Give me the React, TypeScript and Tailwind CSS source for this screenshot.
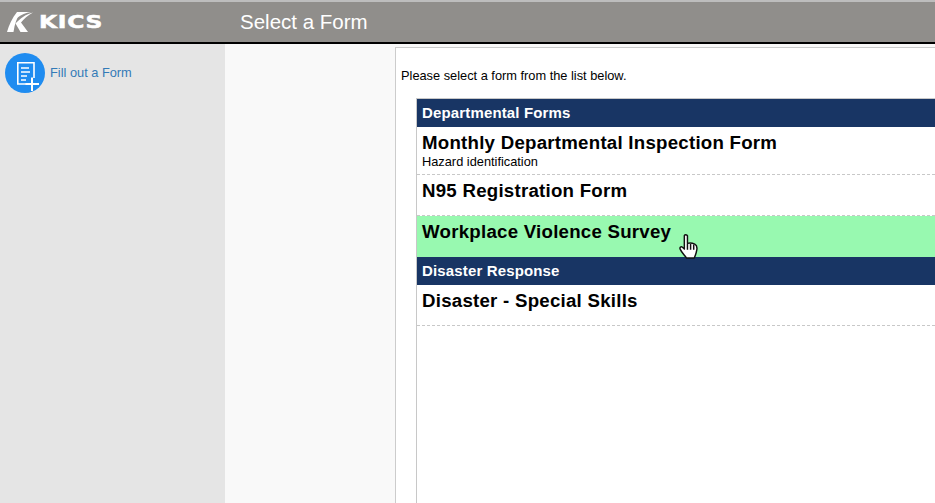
import React from "react";

function Row({ title, green }: { title: string; green?: boolean }) {
  return (
    <div className={`h-[41px] px-[5px] pt-[5px] border-b border-dashed ${green ? "bg-[#98f9b0] border-transparent" : "border-[#c8c8c8]"}`}>
      <div className="text-[18.67px] leading-[22px] font-bold tracking-[0.25px] text-black">{title}</div>
    </div>
  );
}

function Section({ title }: { title: string }) {
  return (
    <div className="h-[28px] bg-[#183564] px-[5px] text-white text-[15px] font-bold leading-[28px] tracking-[0.15px]">{title}</div>
  );
}

export default function App() {
  return (
    <div className="h-[503px] w-[935px] overflow-hidden flex flex-col bg-white font-['Liberation_Sans',Arial,sans-serif]">
      <header className="h-[44px] shrink-0 flex items-center bg-[#908e8b] border-t-2 border-t-[#bdbdbd] border-b-2 border-b-black">
        <div className="w-[240px] pl-[7px] flex items-center gap-[6px]">
          <svg width="26" height="20" viewBox="0 0 26 20" fill="#fff">
            <path d="M0 20 C2 13 5 6 10 0 L14 0 C10 5 7.5 12 6.5 20 Z" />
            <path d="M8.5 11.5 C13 6.5 19 2 26 0.5 C21 3.5 16.5 7 14 10.5 L21 20 L13.5 20 Z" />
            <path d="M11 0 L24 0 C19 .5 14 3 10 6 Z" />
          </svg>
          <span className="inline-block origin-left scale-x-[1.3] text-white text-[18px] font-['DejaVu_Sans',sans-serif] font-bold leading-none tracking-[0.5px] [-webkit-text-stroke:0.5px_white]">KICS</span>
        </div>
        <div className="text-white text-[20.5px] leading-none">Select a Form</div>
      </header>
      <div className="flex-1 flex min-h-0">
        <aside className="w-[225px] shrink-0 bg-[#e5e5e5] pl-[5px] pt-[9px]">
          <div className="flex items-start gap-[5px]">
            <div className="w-[40px] h-[40px] rounded-full bg-[#1f8cf0]">
              <svg width="40" height="40" viewBox="0 0 40 40" fill="none" stroke="#fff" strokeWidth="1.6">
                <path d="M24 31 H12.8 V9.8 H29 V25" />
                <path d="M16 15 H24 M16 19 H25 M16 23 H22 M16 27 H21" strokeWidth="1.5" />
                <path d="M27 24.5 V38 M20.5 31 H34" strokeWidth="2" />
              </svg>
            </div>
            <a className="text-[12.8px] leading-[14px] mt-[13px] text-[#337ab7]">Fill out a Form</a>
          </div>
        </aside>
        <main className="flex-1 bg-[#f9f9f9] pl-[170px] pt-[3px] min-w-0">
          <div className="relative h-full bg-white border border-[#ccc] border-b-0 border-r-0 pl-[5px] pt-[21px]">
            <p className="text-[12.8px] leading-[14px] text-black">Please select a form from the list below.</p>
            <div className="ml-[15px] mt-[15px] h-full border-l border-t border-[#c8c8c8]">
              <Section title="Departmental Forms" />
              <div className="h-[48px] px-[5px] pt-[5px] border-b border-dashed border-[#c8c8c8]">
                <div className="text-[18.67px] leading-[22px] font-bold tracking-[0.25px] text-black">Monthly Departmental Inspection Form</div>
                <div className="text-[12.8px] leading-[14px] mt-[1px] text-black">Hazard identification</div>
              </div>
              <Row title="N95 Registration Form" />
              <Row title="Workplace Violence Survey" green />
              <Section title="Disaster Response" />
              <Row title="Disaster - Special Skills" />
            </div>
            <svg className="absolute left-[283px] top-[186px]" width="19" height="25" viewBox="0 0 18 24" fill="#fff" stroke="#111" strokeWidth="1.4" strokeLinejoin="round">
              <path d="M5 1.5 C5.5 .5 7.5 .5 8 1.8 V9 C10 8.5 13 8.8 15 9.8 C17 10.8 17.5 12 17 15 C16.5 18 16 20 14.5 23 H7 C5 20 2.5 18 1 14.5 C.3 13 1.8 11.5 3.2 12.7 L5 14.5 Z" />
              <path d="M8 9.5 V15 M11 9.5 V15 M14 10 V15" fill="none" />
            </svg>
          </div>
        </main>
      </div>
    </div>
  );
}
